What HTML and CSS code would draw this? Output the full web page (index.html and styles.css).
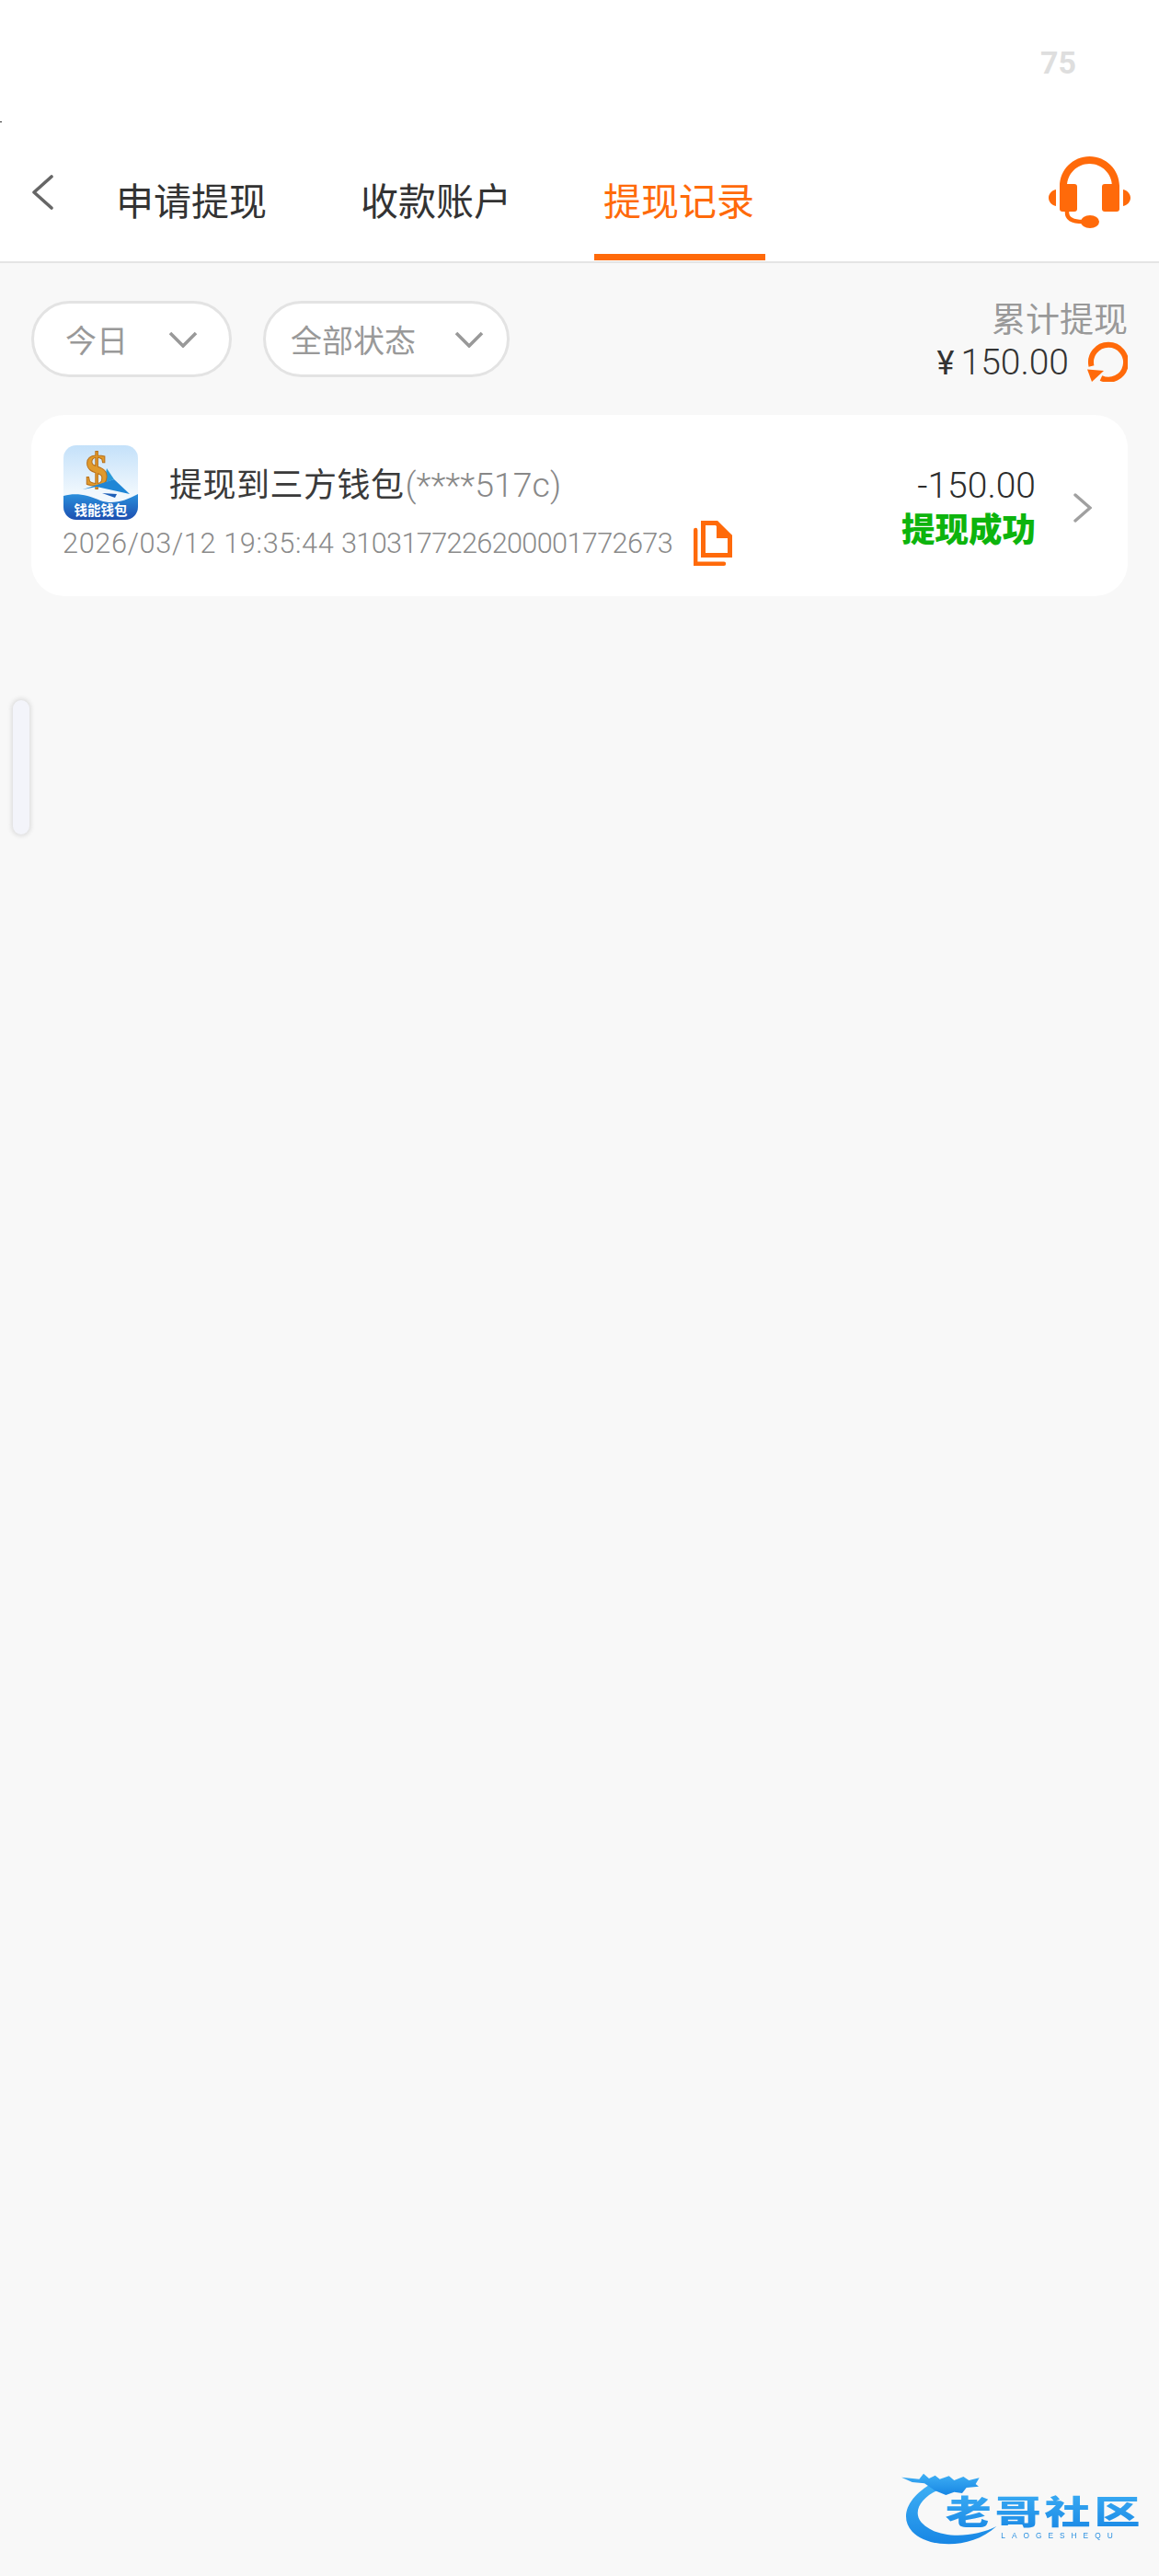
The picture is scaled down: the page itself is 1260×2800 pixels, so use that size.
FILE: index.html
```html
<!DOCTYPE html>
<html lang="zh-CN">
<head>
  <meta charset="UTF-8">
  <meta name="viewport" content="width=device-width, initial-scale=1">
  <title>提现记录</title>
  <link rel="stylesheet" href="styles.css">
</head>
<body>

<div class="page">
  <!-- Header -->
  <header class="header">
    <div class="status-bar"><span class="status-num">75</span></div>
    <nav class="nav">
      <svg class="back-icon" viewBox="0 0 24 38"><path d="M22 2 3 19l19 17" fill="none" stroke="#666" stroke-width="3.6" stroke-linecap="round" stroke-linejoin="round"/></svg>
      <div class="tabs">
        <a class="tab">申请提现</a>
        <a class="tab">收款账户</a>
        <a class="tab active">提现记录</a>
      </div>
      <svg class="headset-icon" viewBox="0 0 89 78">
        <path d="M12 38V32.500C12 14.500 26.500 0 44.500 0S77 14.500 77 32.500V38H69V32.500C69 19 58 8 44.500 8S20 19 20 32.500V38Z" fill="#ff6a0a"/>
        <rect x="12" y="30" width="19" height="30" rx="3" fill="#ff6a0a"/>
        <rect x="58" y="30" width="19" height="30" rx="3" fill="#ff6a0a"/>
        <path d="M8 36C3 37 0 41 0 45s3 8 8 9ZM81 36c5 1 8 5 8 9s-3 8-8 9Z" fill="#ff6a0a"/>
        <path d="M20 58v3c0 6 5 10 17 10" fill="none" stroke="#ff6a0a" stroke-width="4.500"/>
        <ellipse cx="45" cy="71" rx="10" ry="7" fill="#ff6a0a"/>
      </svg>
    </nav>
  </header>

  <!-- Filters -->
  <section class="filter-bar">
    <div class="filters">
      <div class="pill pill-day">
        <span>今日</span>
        <svg class="pill-arrow" viewBox="0 0 32 18"><path d="M2 2 16 16 30 2" fill="none" stroke="#999" stroke-width="3.600"/></svg>
      </div>
      <div class="pill pill-state">
        <span>全部状态</span>
        <svg class="pill-arrow" viewBox="0 0 32 18"><path d="M2 2 16 16 30 2" fill="none" stroke="#999" stroke-width="3.600"/></svg>
      </div>
    </div>
    <div class="total">
      <div class="total-label">累计提现</div>
      <div class="total-row">
        <span class="total-amount"><span class="yen">¥</span>150.00</span>
        <svg class="refresh-icon" viewBox="0 0 44 44">
          <path d="M4.500 27A19 19 0 1 1 15 40" fill="none" stroke="#ff6a0a" stroke-width="6"/>
          <path d="M0 30.500 18 32 5 44Z" fill="#ff6a0a"/>
        </svg>
      </div>
    </div>
  </section>

  <!-- Record -->
  <article class="card">
    <div class="card-main">
      <div class="card-top">
        <svg class="app-icon" viewBox="0 0 81 81">
          <defs>
            <linearGradient id="sky" x1="0" y1="0" x2="0" y2="1">
              <stop offset="0" stop-color="#c4e1fa"/>
              <stop offset="0.65" stop-color="#f1f8fd"/>
            </linearGradient>
            <linearGradient id="sea" x1="0" y1="0" x2="0" y2="1">
              <stop offset="0" stop-color="#2a8fdc"/>
              <stop offset="1" stop-color="#1d4fb0"/>
            </linearGradient>
            <clipPath id="corner"><rect width="81" height="81" rx="14"/></clipPath>
          </defs>
          <g clip-path="url(#corner)">
            <rect width="81" height="81" fill="url(#sky)"/>
            <path d="M47 25 55 37 44 41Z" fill="#2a9ad8"/>
            <text class="app-dollar" x="36" y="44" text-anchor="middle">$</text>
            <path d="M21 48 55 37 72 53 36 45Z" fill="#1f86d6"/>
            <path d="M42 52 58 53 56 57Z" fill="#1c5fb8"/>
            <path d="M0 55C14 51 26 54 40 60 54 65 68 60 81 53V81H0Z" fill="url(#sea)"/>
            <text class="app-name" x="40.500" y="76" text-anchor="middle">钱能钱包</text>
          </g>
        </svg>
        <div class="info-title">提现到三方钱包<span class="masked">(****517c)</span></div>
      </div>
      <div class="info-meta">
        <span><span class="meta-date">2026/03/12 19:35:44</span> <span class="meta-no">3103177226200001772673</span></span>
        <svg class="copy-icon" viewBox="0 0 42 49">
          <path d="M10.500 2.500H25L39.500 17V37.500H10.500Z" fill="none" stroke="#ff6a0a" stroke-width="5"/>
          <path d="M25 0 42 16V19H25Z" fill="#ff6a0a"/>
          <path d="M2.200 10V46.800H33" fill="none" stroke="#ff6a0a" stroke-width="4.400" stroke-linecap="round"/>
        </svg>
      </div>
    </div>

    <div class="amount">
      <div class="amount-value">-150.00</div>
      <div class="amount-status">提现成功</div>
    </div>
    <svg class="card-arrow" viewBox="0 0 20 32"><path d="M2 2 18 16 2 30" fill="none" stroke="#a0a0a0" stroke-width="3.400" stroke-linecap="round"/></svg>
  </article>

  <!-- Overlays -->
  <div class="edge-dot"></div>
  <div class="side-handle"></div>
  <svg class="watermark" viewBox="0 0 900 420">
    <defs>
      <linearGradient id="mark" x1="0" y1="0" x2="0" y2="1">
        <stop offset="0" stop-color="#3fb0f5"/>
        <stop offset="1" stop-color="#1786e4"/>
      </linearGradient>
    </defs>
    <path d="M160 118C85 160 50 225 95 275 140 325 280 340 370 258 290 298 175 300 125 245 95 210 125 165 175 142Z" fill="url(#mark)"/>
    <path d="M60 98 118 104 132 86 150 102 170 92 185 104 215 94 232 108 262 96 280 108 314 100 302 120 312 128 272 132 258 150 232 146 205 156 170 142 135 118 95 114Z" fill="url(#mark)"/>
    <text class="mark-name" transform="translate(203 252) scale(1 0.72)">老哥社区</text>
    <text class="mark-sub" x="385" y="296">LAOGESHEQU</text>
  </svg>
</div>

</body>
</html>
```

FILE: styles.css
```css
* {
  box-sizing: border-box;
}

body {
  margin: 0;
  background-color: #f8f8f8;
  font-family: Roboto, "Noto Sans CJK SC", sans-serif;
  color: #333;
}

.page {
  position: relative;
  height: 2800px;
  overflow: hidden;
}

.header {
  background-color: white;
  border-bottom: 2px solid #e4e4e4;
}

.status-bar {
  height: 170px;
  padding: 48px 90px 0 0;
  text-align: right;
}

.status-num {
  font-size: 34px;
  line-height: 40px;
  font-weight: 700;
  color: #dedede;
}

.nav {
  height: 114px;
  display: flex;
  padding: 0 31px 0 34px;
}

.back-icon {
  width: 24px;
  height: 38px;
  margin-top: 20px;
}

.tabs {
  display: flex;
  gap: 80px;
  margin-left: 57px;
  flex: 1;
}

.tab {
  height: 113px;
  padding: 20px 11px 0;
  font-size: 41px;
  line-height: 60px;
  border-bottom: 7px solid transparent;
}

.tab.active {
  margin-left: -1px;
  padding: 20px 12px 0 10px;
  color: #ff6a0a;
  border-bottom-color: #ff6a0a;
}

.headset-icon {
  width: 89px;
  height: 78px;
}

.filter-bar {
  display: flex;
  justify-content: space-between;
  padding: 41px 34px 36px;
}

.filters {
  display: flex;
  gap: 34px;
}

.pill {
  height: 83px;
  display: flex;
  align-items: center;
  justify-content: space-between;
  background-color: white;
  border: 3px solid #e3e3e3;
  border-radius: 42px;
  font-size: 34px;
  color: #999;
}

.pill-day {
  width: 218px;
  padding: 0 34px 0 34px;
}

.pill-state {
  width: 268px;
  padding: 0 25px 0 27px;
}

.pill-arrow {
  width: 32px;
  height: 18px;
}

.total {
  height: 88px;
  text-align: right;
}

.total-label {
  font-size: 37px;
  line-height: 44px;
  color: #999;
}

.total-row {
  display: flex;
  align-items: center;
  justify-content: flex-end;
  gap: 20px;
  height: 44px;
}

.total-amount {
  font-size: 39px;
  font-weight: 300;
  padding-top: 2px;
}

.yen {
  font-size: 36px;
  font-weight: 400;
  margin-right: 7px;
}

.refresh-icon {
  width: 44px;
  height: 44px;
}

.card {
  display: flex;
  align-items: center;
  height: 197px;
  margin: 0 34px;
  padding: 0 39px 0 34px;
  background-color: white;
  border-radius: 36px;
}

.card-main {
  flex: 1;
}

.card-top {
  display: flex;
  align-items: center;
  gap: 34px;
}

.app-icon {
  width: 81px;
  height: 81px;
  margin-left: 1px;
}

.app-dollar {
  font-family: "Liberation Serif", serif;
  font-size: 50px;
  font-weight: 700;
  fill: #e09a2c;
  stroke: #b9701a;
  stroke-width: 1px;
}

.app-name {
  font-family: "Noto Sans CJK SC", sans-serif;
  font-size: 14.500px;
  font-weight: 700;
  fill: white;
}

.info-title {
  padding-top: 5px;
  font-size: 36px;
  line-height: 48px;
  letter-spacing: 0.5px;
  color: #3a3a3a;
}

.masked {
  margin-left: 1px;
  font-size: 37.500px;
  font-weight: 300;
  color: #888;
  letter-spacing: 0;
}

.info-meta {
  display: flex;
  align-items: center;
  gap: 23px;
  margin-top: 1px;
  font-size: 30.700px;
  font-weight: 300;
  color: #8a8a8a;
}

.meta-date {
  letter-spacing: 0.65px;
}

.meta-no {
  letter-spacing: -0.65px;
}

.copy-icon {
  width: 42px;
  height: 49px;
}

.amount {
  text-align: right;
  margin-right: 41px;
  padding-top: 6px;
}

.amount-value {
  font-size: 39px;
  font-weight: 300;
  line-height: 48px;
  color: #2c2c2c;
}

.amount-status {
  padding-top: 1px;
  font-size: 36.500px;
  line-height: 48px;
  font-weight: 900;
  color: #0db40d;
}

.card-arrow {
  width: 20px;
  height: 32px;
  margin-top: 4px;
}

.edge-dot {
  position: absolute;
  left: 0;
  top: 132px;
  width: 2px;
  height: 1px;
  background-color: #333;
}

.side-handle {
  position: absolute;
  left: 14px;
  top: 761px;
  width: 18px;
  height: 146px;
  background-color: #f3f4fa;
  border-radius: 9px;
  box-shadow: 0 0 4px 2px #dfdfdf;
}

.watermark {
  position: absolute;
  right: 0;
  bottom: 0;
  width: 300px;
  height: 140px;
  filter: blur(0.7px);
}

.mark-name {
  font-family: "Noto Sans CJK SC", sans-serif;
  font-size: 150px;
  font-weight: 900;
  letter-spacing: 12px;
  fill: url(#mark);
}

.mark-sub {
  font-family: "Liberation Sans", sans-serif;
  font-size: 25px;
  letter-spacing: 21px;
  fill: #2a8fe0;
}
```
